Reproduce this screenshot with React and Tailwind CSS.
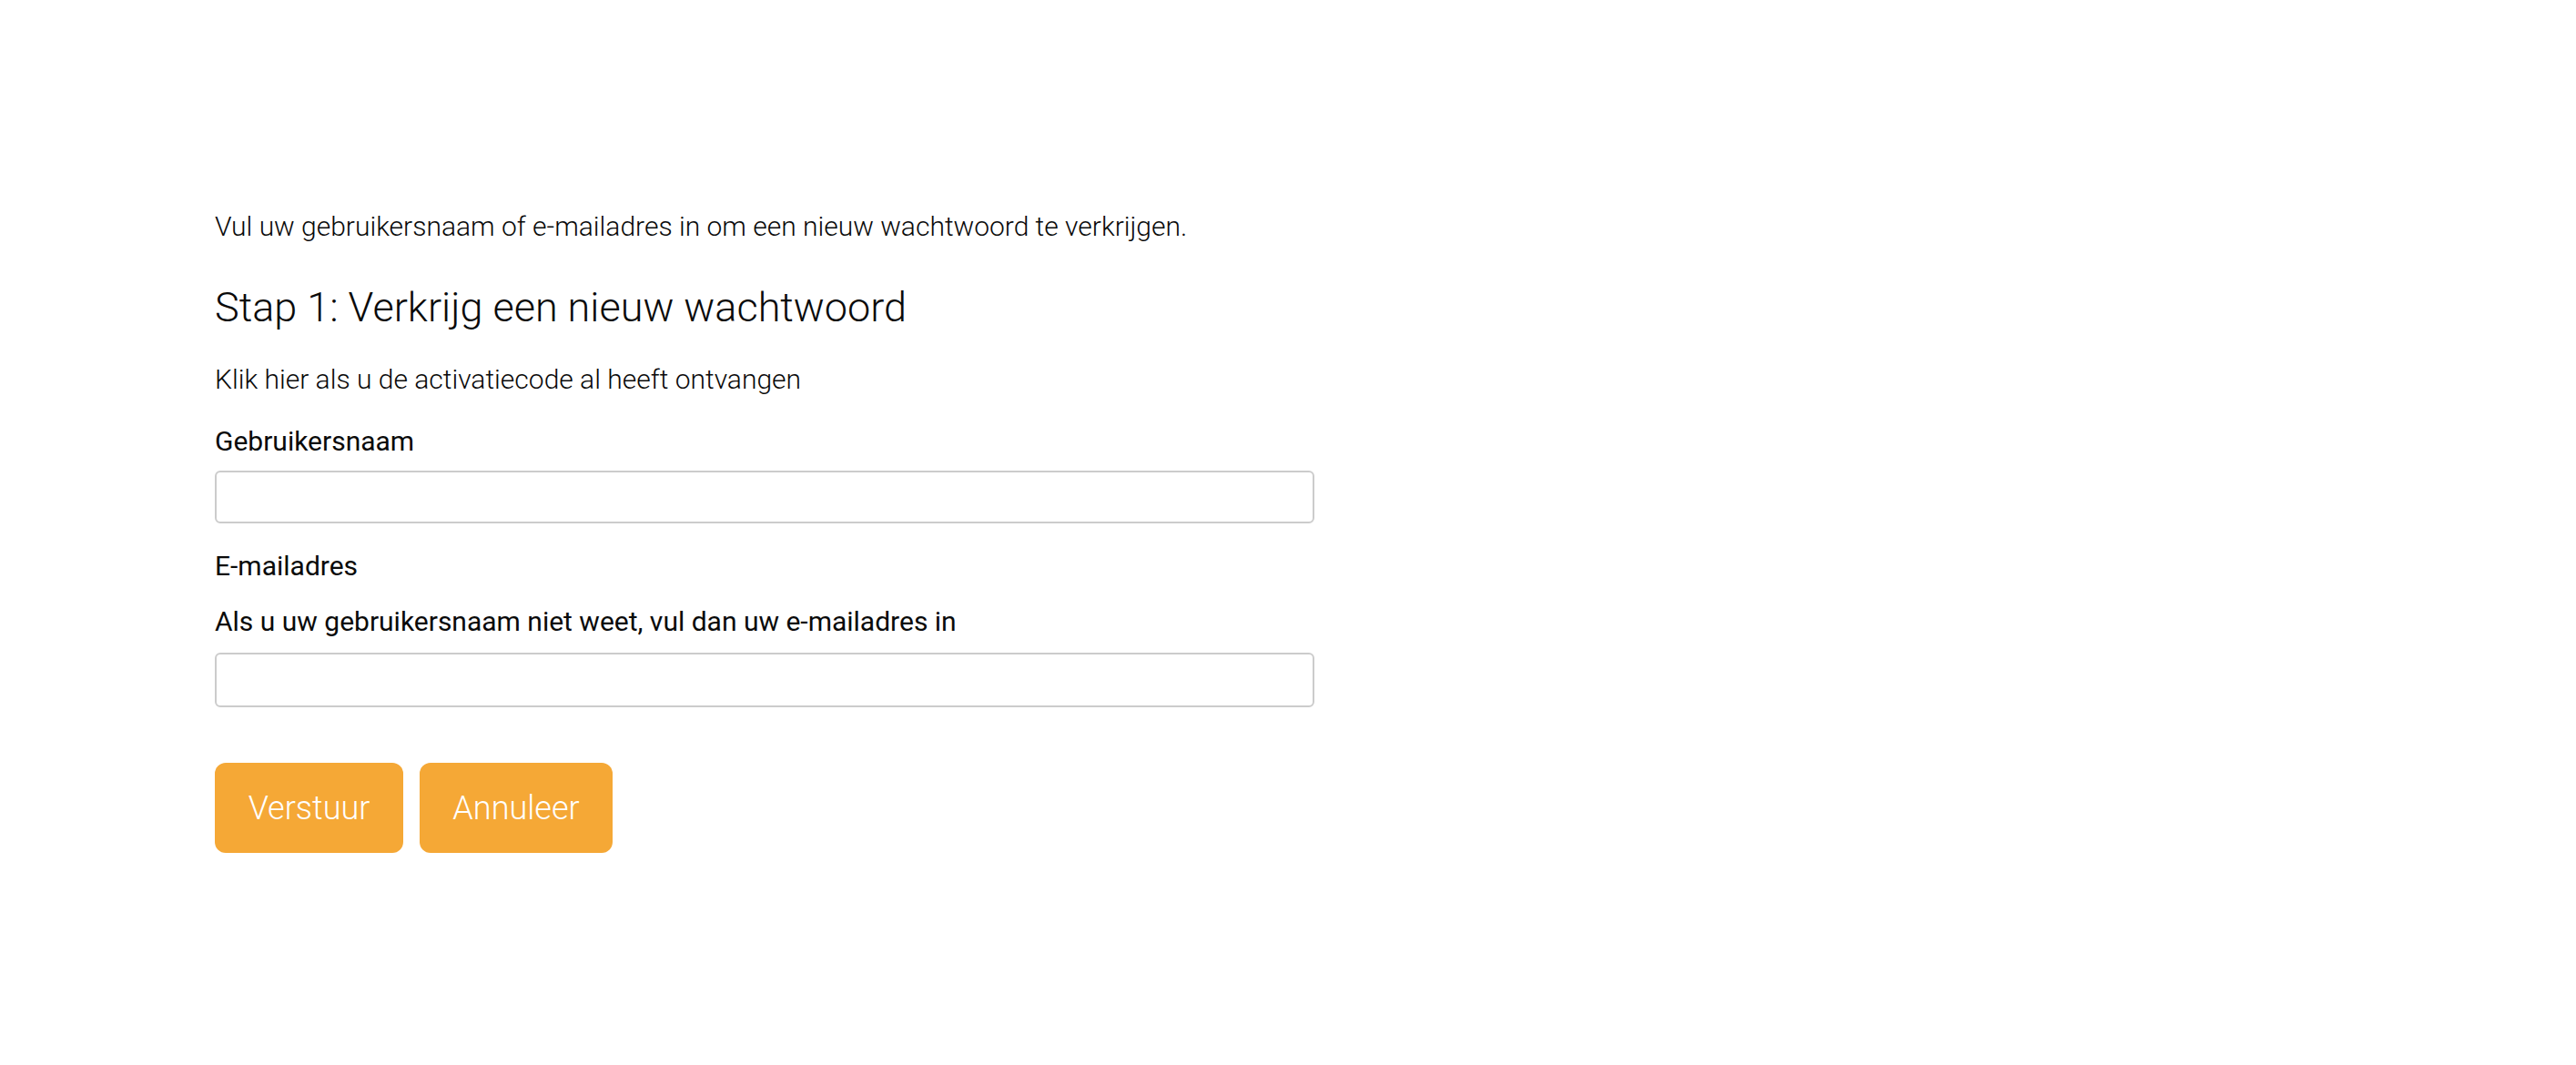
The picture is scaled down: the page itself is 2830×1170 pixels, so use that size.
export default function App() {
  return (
    <div className="min-h-[1170px] w-full bg-white text-[#0a0a0a] font-['Roboto',sans-serif]">
      <div className="flex flex-col pl-[236px] pt-[228px]">
        <p className="text-[30px] leading-[42px] font-light">
          Vul uw gebruikersnaam of e-mailadres in om een nieuw wachtwoord te verkrijgen.
        </p>
        <h2 className="mt-[42px] text-[45px] leading-[52px] font-light">
          Stap 1: Verkrijg een nieuw wachtwoord
        </h2>
        <p className="mt-[32px] text-[30px] leading-[42px] font-light">
          Klik hier als u de activatiecode al heeft ontvangen
        </p>
        <label className="mt-[26px] text-[30px] leading-[42px] font-normal">Gebruikersnaam</label>
        <input
          type="text"
          className="mt-[11px] w-[1208px] h-[58px] rounded-[6px] border-2 border-[#cccccc] bg-white outline-none"
        />
        <label className="mt-[26px] text-[30px] leading-[42px] font-normal">E-mailadres</label>
        <label className="mt-[19px] text-[30px] leading-[42px] font-normal">
          Als u uw gebruikersnaam niet weet, vul dan uw e-mailadres in
        </label>
        <input
          type="text"
          className="mt-[13px] w-[1208px] h-[60px] rounded-[6px] border-2 border-[#cccccc] bg-white outline-none"
        />
        <div className="mt-[61px] flex gap-[18px]">
          <button className="h-[99px] w-[207px] rounded-[12px] bg-[#f5a836] text-white text-[36px] font-light">
            Verstuur
          </button>
          <button className="h-[99px] w-[212px] rounded-[12px] bg-[#f5a836] text-white text-[36px] font-light">
            Annuleer
          </button>
        </div>
      </div>
    </div>
  );
}
